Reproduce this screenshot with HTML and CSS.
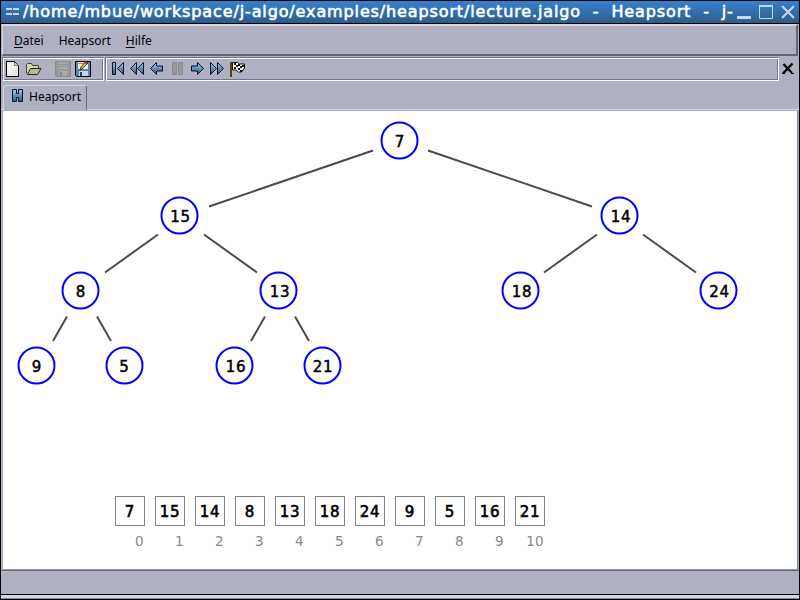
FILE: index.html
```html
<!DOCTYPE html>
<html lang="de">
<head>
<meta charset="utf-8">
<title>Heapsort</title>
<link rel="stylesheet" href="styles.css">
</head>
<body>
<svg width="0" height="0" class="defs">
  <defs>
    <linearGradient id="blue" x1="0" y1="0" x2="0" y2="1"><stop offset="0" stop-color="#a5c9e8"/><stop offset="1" stop-color="#295787"/></linearGradient>
    <linearGradient id="paper" x1="0" y1="0" x2="1" y2="1"><stop offset="0" stop-color="#fff"/><stop offset="1" stop-color="#dcdcd8"/></linearGradient>
  </defs>
</svg>
<div class="window">
  <header class="titlebar">
    <svg class="grip" width="14" height="10"><path d="M0 2h6M7 2h6M0 7h6M7 7h6" stroke="#c5d9ea" stroke-width="2"/></svg>
    <span class="title">/home/mbue/workspace/j-algo/examples/heapsort/lecture.jalgo&nbsp; -&nbsp; Heapsort&nbsp; -&nbsp; j-</span>
    <svg class="controls" width="60" height="16"><g fill="none" stroke="#c5d9ea"><path d="M1 13.500h14" stroke-width="3"/><path d="M23.500 2v12.500h13V1.500"/><path d="M23 2h14" stroke-width="2"/><path d="M46 2l12 12M58 2L46 14" stroke-width="2"/></g></svg>
  </header>
  <nav class="menubar"><span><u>D</u>atei</span><span>Heapsort</span><span><u>H</u>ilfe</span></nav>
  <div class="toolbars">
    <div class="toolbar files">
      <svg width="100" height="22" viewBox="3 58 100 22">
        <path d="M6.500 61.500h8l4 4v11h-12z" fill="url(#paper)" stroke="#000"/><path d="M14.500 62v3.500h4" fill="#ddd" stroke="#777"/>
        <path d="M26.500 73.500v-9l1-1h4l1 2h6v3" fill="#d5d6b0" stroke="#45452a"/><path d="M27.500 74.500l3-6h10.500l-3.500 6z" fill="#b9bc91" stroke="#292918"/>
        <path d="M55.500 61.500h15v15h-14l-1-1z" fill="#999" stroke="#8a8a8a"/><path d="M58 62h10v7H58z" fill="#a9a9a9"/><path d="M58 64.500h10M58 66.500h10" stroke="#929292"/><path d="M59 71h8v5h-8z" fill="#aaa"/><path d="M60 72h2v4h-2z" fill="#858585"/>
        <path d="M75.500 61.500h15v15h-14l-1-1z" fill="#5c83aa" stroke="#000"/><path d="M78 62h10v7H78z" fill="#eee"/><path d="M78 63.500h10" stroke="#c77"/><path d="M79 71h9v5h-9z" fill="#ccd5dc"/><path d="M80 72h2v4h-2z" fill="#243f5a"/>
        <path d="M80 70l1-3 5-6 2 2-6 6z" fill="#efb62f" stroke="#211800" stroke-width=".8"/><path d="M85 62l2 2" stroke="#a22" stroke-width="1.500"/>
      </svg>
    </div>
    <div class="toolbar player">
      <svg width="145" height="22" viewBox="106 58 145 22">
        <g fill="url(#blue)" stroke="#07131f">
          <path d="M112.500 62.500h3v12h-3zM123.500 62.500v12l-6-6z"/>
          <path d="M136.500 62.500v12l-6-6zM143.500 62.500v12l-6-6z"/>
          <path d="M150.500 68.500l6-6v3.500h6v5h-6v3.500z"/>
          <path d="M203.500 68.500l-6-6v3.500h-6v5h6v3.500z"/>
          <path d="M210.500 62.500v12l6-6zM217.500 62.500v12l6-6z"/>
        </g>
        <path d="M172.500 62.500h4v12h-4zM178.500 62.500h4v12h-4z" fill="#999" stroke="#898985"/>
        <path d="M231 62v15" stroke="#5b430b" stroke-width="2"/>
        <path d="M232.500 62.500h5l2 1.500h5v4l-3 4h-3l-2.500-2h-3.500z" fill="#fff" stroke="#111"/>
        <path d="M234 63h2v2h-2zM238 64h2v2h-2zM242 65h2v2h-2zM236 65h2v2h-2zM240 66h2v2h-2zM234 67h2v2h-2zM238 68h2v2h-2zM240 70h2v2h-2z" fill="#111"/>
      </svg>
    </div>
    <svg class="close" width="12" height="12"><path d="M1.500 1l8.500 9M10.500 .5L1 10.500" stroke="#000" stroke-width="2.200"/><path d="M0 10.500h3M9 10.500h3" stroke="#000"/></svg>
  </div>
  <div class="tabs"><div class="tab">
    <svg width="12" height="13"><path d="M.5.500h4v4h2v-4h4v12h-4v-4h-2v4h-4z" fill="url(#blue)" stroke="#0b1823"/></svg><span>Heapsort</span>
  </div></div>
  <main class="panel">
    <svg class="tree" width="794" height="300" viewBox="3 111 794 300">
      <g class="edges">
        <path d="M373 150.500L209 206.500M428 150.500L592 206.500M158 234.500L105 272.500M204 234.500L257 272.500M597 234.500L544 272.500M643 234.500L696 272.500M67 316.500L53 341M97 316.500L111 341M265 316.500L251 341M295 316.500L309 341"/>
      </g>
      <g class="nodes">
        <circle cx="399.500" cy="140.500" r="18"/><circle cx="179.500" cy="215.500" r="18"/><circle cx="619.500" cy="215.500" r="18"/><circle cx="80.500" cy="290.500" r="18"/><circle cx="278.500" cy="290.500" r="18"/><circle cx="520.500" cy="290.500" r="18"/><circle cx="718.500" cy="290.500" r="18"/><circle cx="36.500" cy="365.500" r="18"/><circle cx="124.500" cy="365.500" r="18"/><circle cx="234.500" cy="365.500" r="18"/><circle cx="322.500" cy="365.500" r="18"/>
      </g>
      <g class="keys">
        <text x="400" y="147">7</text><text x="180.500" y="222">15</text><text x="621" y="222">14</text><text x="81" y="297">8</text><text x="280" y="297">13</text><text x="522" y="297">18</text><text x="719.500" y="297">24</text><text x="37" y="372">9</text><text x="124.500" y="372">5</text><text x="236" y="372">16</text><text x="323" y="372">21</text>
      </g>
    </svg>
    <div class="array">
      <div class="cell"><b>7</b><i>0</i></div><div class="cell"><b>15</b><i>1</i></div><div class="cell"><b>14</b><i>2</i></div><div class="cell"><b>8</b><i>3</i></div><div class="cell"><b>13</b><i>4</i></div><div class="cell"><b>18</b><i>5</i></div><div class="cell"><b>24</b><i>6</i></div><div class="cell"><b>9</b><i>7</i></div><div class="cell"><b>5</b><i>8</i></div><div class="cell"><b>16</b><i>9</i></div><div class="cell"><b>21</b><i>10</i></div>
    </div>
  </main>
  <div class="status"></div>
  <div class="frame"></div>
</div>
</body>
</html>
```
FILE: styles.css
```css
* { box-sizing: border-box; }
body { margin: 0; }
.defs { position: absolute; }
svg { display: block; flex: none; }
.window {
  width: 800px; height: 600px; display: flex; flex-direction: column;
  border: 1px solid #000; background: #afb1c3; overflow: hidden;
  font: 12px "Noto Sans", sans-serif; color: #000;
}
.titlebar {
  height: 23px; flex: none; display: flex; align-items: center;
  padding: 0 3px 0 5px; border-bottom: 1px solid #000;
  background: linear-gradient(#3382cf, #2f5b88);
}
.title {
  flex: 1; margin-left: 3px; color: #fff; white-space: nowrap; overflow: hidden;
  font: 16px/22px "DejaVu Sans", sans-serif; letter-spacing: 0.875px;
  -webkit-text-stroke: 0.6px #fff;
}
.controls { margin-left: 1px; }
.menubar {
  height: 32px; flex: none; margin: 0 1px 0 1px; display: flex; align-items: center; gap: 15px;
  padding: 1px 0 0 11px; border: solid; border-width: 2px 2px 2px 1px;
  border-color: #d5d5e2 #656673 #656673 #d5d5e2;
}
.menubar u { text-underline-offset: 2px; }
.toolbars { height: 25px; flex: none; display: flex; padding: 1px 4px 0 1px; }
.toolbar {
  height: 24px; border: 1px solid #73778a; border-right-color: #fff; border-bottom-color: #fff;
  box-shadow: inset 1px 1px #fff, inset -1px -1px #73778a;
}
.files { width: 102px; margin-right: 1px; }
.player { flex: 1; }
.close { margin: 6px 1px 0 3px; }
.tabs { height: 29px; flex: none; padding: 4px 0 0 2px; margin-left: 1px; border-bottom: 1px solid #d5d5e2; }
.tab {
  width: 84px; height: 25px; display: flex; align-items: center; padding: 0 0 2px 8px; gap: 5px; margin-left: -1px;
  border: 1px solid #d5d5e2; border-right-color: #656673; border-bottom: 0; border-radius: 3px 3px 0 0;
  background: #afb1c3;
}
.tab svg { margin-top: -3px; }
.tab span { margin-top: -1px; }
.panel { height: 459px; flex: none; margin: 1px 1px 0 2px; background: #fff; border-right: 1px solid #83869a; border-bottom: 1px solid #9295a5; }
.edges { stroke: #4b4b4b; stroke-width: 2; fill: none; }
.nodes { fill: #fff; stroke: #00f; stroke-width: 2; }
.keys { font: 15px "DejaVu Sans", sans-serif; text-anchor: middle; letter-spacing: 0.8px; stroke: #000; stroke-width: 0.5px; }
.array { display: flex; gap: 10px; padding: 85px 0 0 112px; }
.cell { width: 30px; }
.cell b {
  display: block; height: 30px; border: 1px solid #808080; text-align: center;
  font: 15px/30px "DejaVu Sans", sans-serif; letter-spacing: 0.8px; -webkit-text-stroke: 0.6px #000;
}
.cell i { display: block; margin: 6px 1.5px 0 -2px; text-align: right; font: 13.5px/18px "DejaVu Sans", sans-serif; color: #888; }
.status { height: 25px; flex: none; border-top: 1px solid #656673; border-bottom: 1px solid #000; }
.frame { flex: 1; background: #d5d5e2; border-bottom: 1px solid #83859b; }
```
